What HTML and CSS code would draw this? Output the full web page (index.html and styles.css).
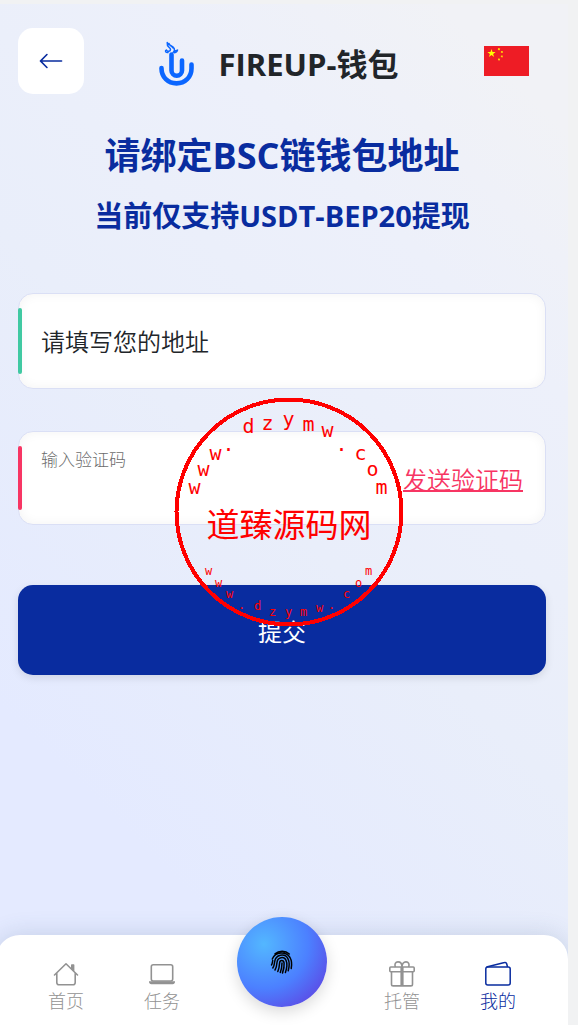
FILE: index.html
```html
<!DOCTYPE html>
<html lang="zh-CN">
<head>
<meta charset="utf-8">
<meta name="viewport" content="width=device-width, initial-scale=1">
<title>FIREUP-钱包</title>
<link rel="stylesheet" href="styles.css">
</head>
<body>
<div class="app">
  <header class="header">
    <button class="back" type="button" aria-label="返回">
      <svg width="26" height="26" viewBox="0 0 16 16" fill="currentColor"><path d="M15 8a.5.5 0 0 0-.5-.5H2.707l3.147-3.146a.5.5 0 1 0-.708-.708l-4 4a.5.5 0 0 0 0 .708l4 4a.5.5 0 0 0 .708-.708L2.707 8.5H14.5A.5.5 0 0 0 15 8z"/></svg>
    </button>
    <div class="brand">
      <svg class="logo" width="40" height="46" viewBox="0 0 40 46" fill="none" stroke="#0b66ff" stroke-linecap="round" stroke-linejoin="round">
        <path stroke-width="4.6" d="M4.500 27v.5C4.500 36 11 42.400 19.500 42.400S34.500 36 34.500 27.500V23.500"/>
        <path stroke-width="4.600" d="M14.500 13.500V29.500a5.250 5.250 0 0 0 10.500 0V19.500"/>
        <path stroke-width="1.500" d="M11 11.500C8 12 8 9.500 9.500 9c1 2 4 1.500 4-.5 0-2-4-2.500-3.300-7 .8 2.800 6 3 7 6 .6 1.800-.7 3 .8 3.500M16 11.500c1-2 3-1.500 4.500-2.500-.2 1.700-.8 2.500-3 2.700M12 2.500c0 2 3 2.500 4 4.500"/>
      </svg>
      <span class="brand-name">FIREUP-钱包</span>
    </div>
    <button class="language" type="button" aria-label="中文">
      <svg width="45" height="30" viewBox="0 0 45 30"><path fill="#ee1c25" d="M0 0h45v30H0z"/><g fill="#ff0"><path d="M7.500 3l1 3h3.100L9.100 8l1 3-2.600-1.900L4.900 11l1-3-2.500-2h3.100z"/><path d="M14 2l2.200.5-.5 1.800-1.800-.3zM17 5l2 .3-.3 1.700-1.800-.3zM17 9.500l2 .3-.5 1.700-1.700-.5zM14 12.500l2.200.2-.5 1.800-1.700-.3z" opacity=".8"/></g></svg>
    </button>
  </header>

  <main class="main">
    <h1 class="title">请绑定BSC链钱包地址</h1>
    <h2 class="subtitle">当前仅支持USDT-BEP20提现</h2>
    <form class="form">
      <div class="field field-address">
        <input class="input" type="text" aria-label="地址" placeholder="请填写您的地址">
      </div>
      <div class="field field-code">
        <div class="code">
          <label class="code-label" for="code">输入验证码</label>
          <input class="input" id="code" type="text">
        </div>
        <a class="send" href="#">发送验证码</a>
      </div>
      <button class="submit" type="submit">提交</button>
      <svg class="stamp" width="230" height="230" viewBox="174.500 397.500 230 230" role="img" aria-label="道臻源码网">
        <circle cx="289.500" cy="512.500" r="112.500" fill="none" stroke="#f00" stroke-width="4" shape-rendering="crispEdges"/>
        <text class="stamp-name" x="289.500" y="537">道臻源码网</text>
        <g class="stamp-top">
          <text x="195" y="494">w</text><text x="204" y="476">w</text><text x="216" y="460">w</text><text x="229" y="451">.</text><text x="249" y="433">d</text><text x="268" y="430">z</text><text x="289" y="426">y</text><text x="309" y="431">m</text><text x="328" y="437">w</text><text x="342" y="451">.</text><text x="361" y="460">c</text><text x="373" y="476">o</text><text x="382" y="494">m</text>
        </g>
        <g class="stamp-bottom">
          <text x="209" y="575">w</text><text x="219" y="587">w</text><text x="230" y="598">w</text><text x="242" y="609">.</text><text x="258" y="610">d</text><text x="273" y="616">z</text><text x="289" y="616">y</text><text x="304" y="616">m</text><text x="320" y="612">w</text><text x="332" y="609">.</text><text x="347" y="598">c</text><text x="359" y="587">o</text><text x="369" y="575">m</text>
        </g>
      </svg>
    </form>
  </main>

  <nav class="nav">
    <a class="tab" href="#">
      <svg width="26" height="26" viewBox="0 0 26 26" fill="none" stroke="currentColor" stroke-width="1.600" stroke-linecap="round" stroke-linejoin="round"><path d="M1.500 14L13 2.800 24.500 14M3.800 12v9.500a2.300 2.300 0 0 0 2.300 2.300h13.800a2.300 2.300 0 0 0 2.300-2.300V12"/><path fill="currentColor" d="M18.800 4h1.800v5.500l-1.800-1.700z"/></svg>
      <span>首页</span>
    </a>
    <a class="tab" href="#">
      <svg width="26" height="26" viewBox="0 0 26 26" fill="none" stroke="currentColor" stroke-width="1.600"><rect x="2.300" y="3.800" width="21.400" height="16.200" rx="2"/><path fill="currentColor" stroke="none" d="M0 20.300h26v.7c0 1.200-1 2.300-2.300 2.300H2.300C1 23.300 0 22.200 0 21z"/></svg>
      <span>任务</span>
    </a>
    <div class="center">
      <button class="scan" type="button" aria-label="指纹">
        <svg width="24" height="24" viewBox="0 0 24 24" fill="none" stroke="#000" stroke-width="1.500" stroke-linecap="round"><path d="M5 3.800C9 .4 15.500.4 19.300 4M2.300 9C5.500 1.500 16 1.200 20 7.500c2 3.500 2 7 1.200 11M1.500 15c.8-1 .8-2 1.200-4.500M2.800 18c1.400-2 1.500-4 1.800-6C5.500 4 15 3 18 8.800c1.500 3 1.500 7.500.2 12M5 20c1.500-2.500 1.800-5 2-7.500.6-5.500 7-6.500 9-2.200 1.300 3 .8 8.200-.6 12.200M7.800 21.500c1.200-2.800 1.600-5.500 1.800-8.500.3-3.500 4-3.200 4.500 0 .3 3-.5 6.700-1.600 10M10.300 22.500c1.200-3 1.700-6 1.700-9.500"/></svg>
      </button>
    </div>
    <a class="tab" href="#">
      <svg width="26" height="26" viewBox="0 0 26 26" fill="none" stroke="currentColor" stroke-width="1.600"><rect x=".8" y="6" width="24.400" height="4.700" rx="1"/><path d="M2.500 10.700v12.500a1.700 1.700 0 0 0 1.700 1.700h17.600a1.700 1.700 0 0 0 1.700-1.700V10.700M6.400 6C5.200 3.200 6.500.9 9 .9c2.500 0 4 2.100 4 5.100 0-3 1.500-5.100 4-5.100s3.800 2.300 2.600 5.100"/><path stroke-width="3.200" d="M13 6v19"/></svg>
      <span>托管</span>
    </a>
    <a class="tab tab-active" href="#">
      <svg width="26" height="26" viewBox="0 0 26 26" fill="none" stroke="currentColor" stroke-width="1.500" stroke-linejoin="round"><rect x=".8" y="6" width="24.400" height="18" rx="2"/><path d="M1.500 6L19.500 1.500a1.800 1.800 0 0 1 2.200 1.200L22.500 6"/></svg>
      <span>我的</span>
    </a>
  </nav>
</div>
</body>
</html>
```
FILE: styles.css
```css
* {
  box-sizing: border-box;
}

body {
  margin: 0;
  padding: 4px 10px 0 0;
  background: #f1f2f3;
  font-family: "Open Sans", "Noto Sans CJK SC", sans-serif;
  color: #212529;
}

button,
input {
  font-family: inherit;
  border: 0;
  padding: 0;
}

svg {
  display: block;
}

.app {
  display: flex;
  flex-direction: column;
  min-height: calc(100vh - 4px);
  overflow: hidden;
  background: linear-gradient(45deg, #e4eaff 20%, #e9eefa 50%, #edf0fa 75%, #f1f2f6 92%);
}

.header {
  display: grid;
  grid-template-columns: 66px 1fr 79px;
  align-items: center;
  padding: 24px 22px 0 18px;
}

.back {
  display: grid;
  place-items: center;
  height: 66px;
  border-radius: 15px;
  background: #fff;
  color: #092c9f;
}

.brand {
  display: flex;
  align-items: center;
  justify-content: center;
  gap: 22px;
  padding: 6px 0 0 4px;
}

.brand-name {
  font-size: 31px;
  line-height: 44px;
  font-weight: 700;
}

.language {
  display: grid;
  place-items: center;
  height: 66px;
  background: none;
}

.main {
  flex: 1;
  padding: 34px 22px 0 18px;
}

.title,
.subtitle {
  margin: 0;
  color: #092c9f;
  font-weight: 700;
  text-align: center;
}

.title {
  font-size: 36px;
  line-height: 56px;
}

.subtitle {
  margin-top: 10px;
  font-size: 29px;
  line-height: 44px;
}

.form {
  position: relative;
  margin-top: 55px;
}

.field {
  position: relative;
  display: flex;
  border: 1px solid #dadff5;
  border-radius: 15px;
  background: #fff;
  box-shadow: inset 0 0 12px rgba(0, 0, 0, 0.05);
}

.field::before {
  content: "";
  position: absolute;
  left: -1px;
  top: 14px;
  bottom: 14px;
  width: 4px;
  border-radius: 2px;
  background: #40c9a2;
}

.field-address {
  height: 96px;
  padding-left: 22px;
}

.field-code {
  align-items: center;
  height: 94px;
  margin-top: 42px;
  padding: 0 22px;
}

.field-code::before {
  background: #f73563;
}

.input {
  flex: 1;
  min-width: 0;
  background: none;
  outline: 0;
  font-size: 24px;
  font-weight: 350;
}

.input::placeholder {
  color: #212529;
  opacity: 1;
}

.code {
  flex: 1;
  display: flex;
  flex-direction: column;
  height: 66px;
}

.code-label {
  color: #6c6c6c;
  font-size: 17px;
  font-weight: 300;
  line-height: 30px;
}

.send {
  padding-top: 4px;
  color: #f73563;
  font-size: 24px;
  font-weight: 350;
  line-height: 36px;
  text-decoration-thickness: 2px;
}

.submit {
  display: block;
  width: 100%;
  height: 90px;
  margin-top: 60px;
  border-radius: 15px;
  background: #092c9f;
  box-shadow: 0 3px 8px rgba(0, 0, 0, 0.1);
  color: #fff;
  font-size: 24px;
}

.stamp {
  position: absolute;
  left: 50%;
  top: 104px;
  margin-left: -108px;
  pointer-events: none;
}

.stamp text {
  fill: #f00;
  text-anchor: middle;
  font-family: "DejaVu Sans Mono", "Noto Sans CJK SC", monospace;
}

.stamp .stamp-name {
  font-size: 33px;
}

.stamp-top {
  font-size: 20px;
}

.stamp-bottom {
  font-size: 12px;
}

.nav {
  display: grid;
  grid-template-columns: 2fr 2fr 3fr 2fr 2fr;
  height: 90px;
  margin-left: -4px;
  padding: 0 22px;
  border-radius: 24px 24px 0 0;
  background: #fff;
  box-shadow: 0 0 24px rgba(60, 90, 130, 0.2);
}

.tab {
  display: flex;
  flex-direction: column;
  align-items: center;
  padding-top: 26px;
  color: #929292;
  font-size: 18px;
  font-weight: 300;
  line-height: 28px;
  text-decoration: none;
}

.tab-active {
  color: #092c9f;
}

.center {
  display: flex;
  justify-content: center;
}

.scan {
  display: grid;
  place-items: center;
  width: 90px;
  height: 90px;
  margin-top: -18px;
  border-radius: 50%;
  background: radial-gradient(circle at 30% 30%, #53b7ff 0%, #4c80ff 50%, #6430d8 100%);
  box-shadow: 0 5px 15px rgba(0, 0, 0, 0.15);
}
```
